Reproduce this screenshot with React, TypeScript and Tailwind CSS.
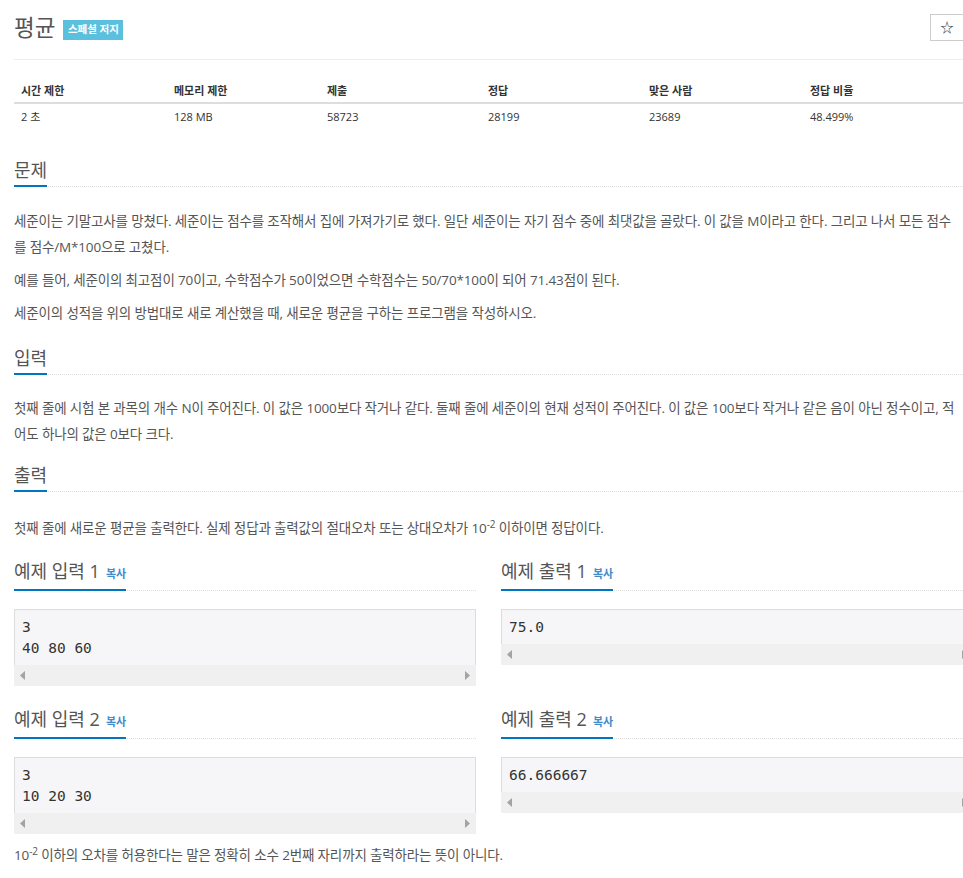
import React from "react";

const FONT = { fontFamily: '"Open Sans", "Noto Sans CJK KR", sans-serif' };

function SectionTitle({ children }: { children: React.ReactNode }) {
  return (
    <div className="flex border-b border-dotted border-[#dddddd]">
      <div className="-mb-px inline-flex items-baseline border-b-2 border-[#0076c0] pb-[1px] text-[18px] leading-[28px] text-[#555555]">
        {children}
      </div>
    </div>
  );
}

function ScrollBar() {
  return (
    <div className="flex h-[21px] items-center justify-between bg-[#f0f0f0] px-[6px]">
      <svg width="6" height="9" viewBox="0 0 6 9">
        <path d="M5 0 L0 4.5 L5 9 Z" fill="#a3a3a3" />
      </svg>
      <svg width="6" height="9" viewBox="0 0 6 9">
        <path d="M1 0 L6 4.5 L1 9 Z" fill="#a3a3a3" />
      </svg>
    </div>
  );
}

function Sample({ title, lines }: { title: string; lines: string[] }) {
  return (
    <div>
      <SectionTitle>
        <span>{title}</span>
        <span className="ml-[6px] text-[11px] font-semibold text-[#428bca]">복사</span>
      </SectionTitle>
      <div className="mt-[18px]">
        <div className="border border-b-0 border-[#dcdce0] bg-[#f6f6f8] px-[7px] pb-[6px] pt-[7px]">
          {lines.map((l, i) => (
            <div
              key={i}
              className="whitespace-pre text-[14.5px] leading-[21px] text-[#333333]"
              style={{ fontFamily: '"DejaVu Sans Mono", "Liberation Mono", monospace' }}
            >
              {l}
            </div>
          ))}
        </div>
        <ScrollBar />
      </div>
    </div>
  );
}

export default function App() {
  const heads = ["시간 제한", "메모리 제한", "제출", "정답", "맞은 사람", "정답 비율"];
  const vals = ["2 초", "128 MB", "58723", "28199", "23689", "48.499%"];
  const widths = ["w-[153px]", "w-[153px]", "w-[161px]", "w-[161px]", "w-[161px]", "w-[160px]"];

  return (
    <div className="w-[963px] overflow-hidden bg-white" style={FONT}>
      <div className="w-[949px] ml-[14px] text-[13.5px] tracking-[-0.15px] text-[#555555]">
        {/* Header */}
        <div className="border-b border-[#eeeeee] pb-[18px] pt-[14px]">
          <div className="flex h-[27px] items-center justify-between">
            <div className="flex items-center">
              <span className="text-[22.5px] leading-[27px] tracking-normal text-[#555555]">평균</span>
              <span className="ml-[8px] mt-[4px] flex h-[20px] w-[60px] items-center justify-center bg-[#5bc0de] text-[10.5px] font-bold tracking-normal text-white">
                스페셜 저지
              </span>
            </div>
            <div className="-mr-[1px] flex h-[27px] w-[34px] items-center justify-center border border-[#cccccc] bg-white text-[13px] text-[#333333]">
              ☆
            </div>
          </div>
        </div>

        {/* Table */}
        <div className="mt-[20px] tracking-normal">
          <div className="flex h-[24px] items-center border-b-2 border-[#dddddd]">
            {heads.map((h, i) => (
              <div key={i} className={`${widths[i]} pl-[7px] text-[11px] font-bold text-[#333333]`}>
                {h}
              </div>
            ))}
          </div>
          <div className="flex h-[26px] items-center">
            {vals.map((v, i) => (
              <div key={i} className={`${widths[i]} pl-[7px] text-[11px] text-[#333333]`}>
                {v}
              </div>
            ))}
          </div>
        </div>

        {/* 문제 */}
        <div className="mt-[26px]">
          <SectionTitle>문제</SectionTitle>
          <div className="mt-[21px] leading-[26px]">
            <p className="mb-[7px]">
              세준이는 기말고사를 망쳤다. 세준이는 점수를 조작해서 집에 가져가기로 했다. 일단 세준이는 자기 점수 중에 최댓값을 골랐다. 이 값을 M이라고 한다. 그리고 나서 모든 점수를 점수/M*100으로 고쳤다.
            </p>
            <p className="mb-[7px]">
              예를 들어, 세준이의 최고점이 70이고, 수학점수가 50이었으면 수학점수는 50/70*100이 되어 71.43점이 된다.
            </p>
            <p>세준이의 성적을 위의 방법대로 새로 계산했을 때, 새로운 평균을 구하는 프로그램을 작성하시오.</p>
          </div>
        </div>

        {/* 입력 */}
        <div className="mt-[18px]">
          <SectionTitle>입력</SectionTitle>
          <div className="mt-[20px] leading-[26px]">
            <p>
              첫째 줄에 시험 본 과목의 개수 N이 주어진다. 이 값은 1000보다 작거나 같다. 둘째 줄에 세준이의 현재 성적이 주어진다. 이 값은 100보다 작거나 같은 음이 아닌 정수이고, 적어도 하나의 값은 0보다 크다.
            </p>
          </div>
        </div>

        {/* 출력 */}
        <div className="mt-[14px]">
          <SectionTitle>출력</SectionTitle>
          <div className="mt-[23px] leading-[26px]">
            <p>
              첫째 줄에 새로운 평균을 출력한다. 실제 정답과 출력값의 절대오차 또는 상대오차가 10
              <sup className="text-[10px]">-2</sup> 이하이면 정답이다.
            </p>
          </div>
        </div>

        {/* Samples */}
        <div className="-mr-[10px] mt-[16px] grid grid-cols-[462px_1fr] gap-x-[25px] gap-y-[19px] tracking-normal">
          <Sample title="예제 입력 1" lines={["3", "40 80 60"]} />
          <Sample title="예제 출력 1" lines={["75.0"]} />
          <Sample title="예제 입력 2" lines={["3", "10 20 30"]} />
          <Sample title="예제 출력 2" lines={["66.666667"]} />
        </div>

        <p className="mt-[8px] pb-[20px] leading-[26px]">
          10<sup className="text-[10px]">-2</sup> 이하의 오차를 허용한다는 말은 정확히 소수 2번째 자리까지 출력하라는 뜻이 아니다.
        </p>
      </div>
    </div>
  );
}
